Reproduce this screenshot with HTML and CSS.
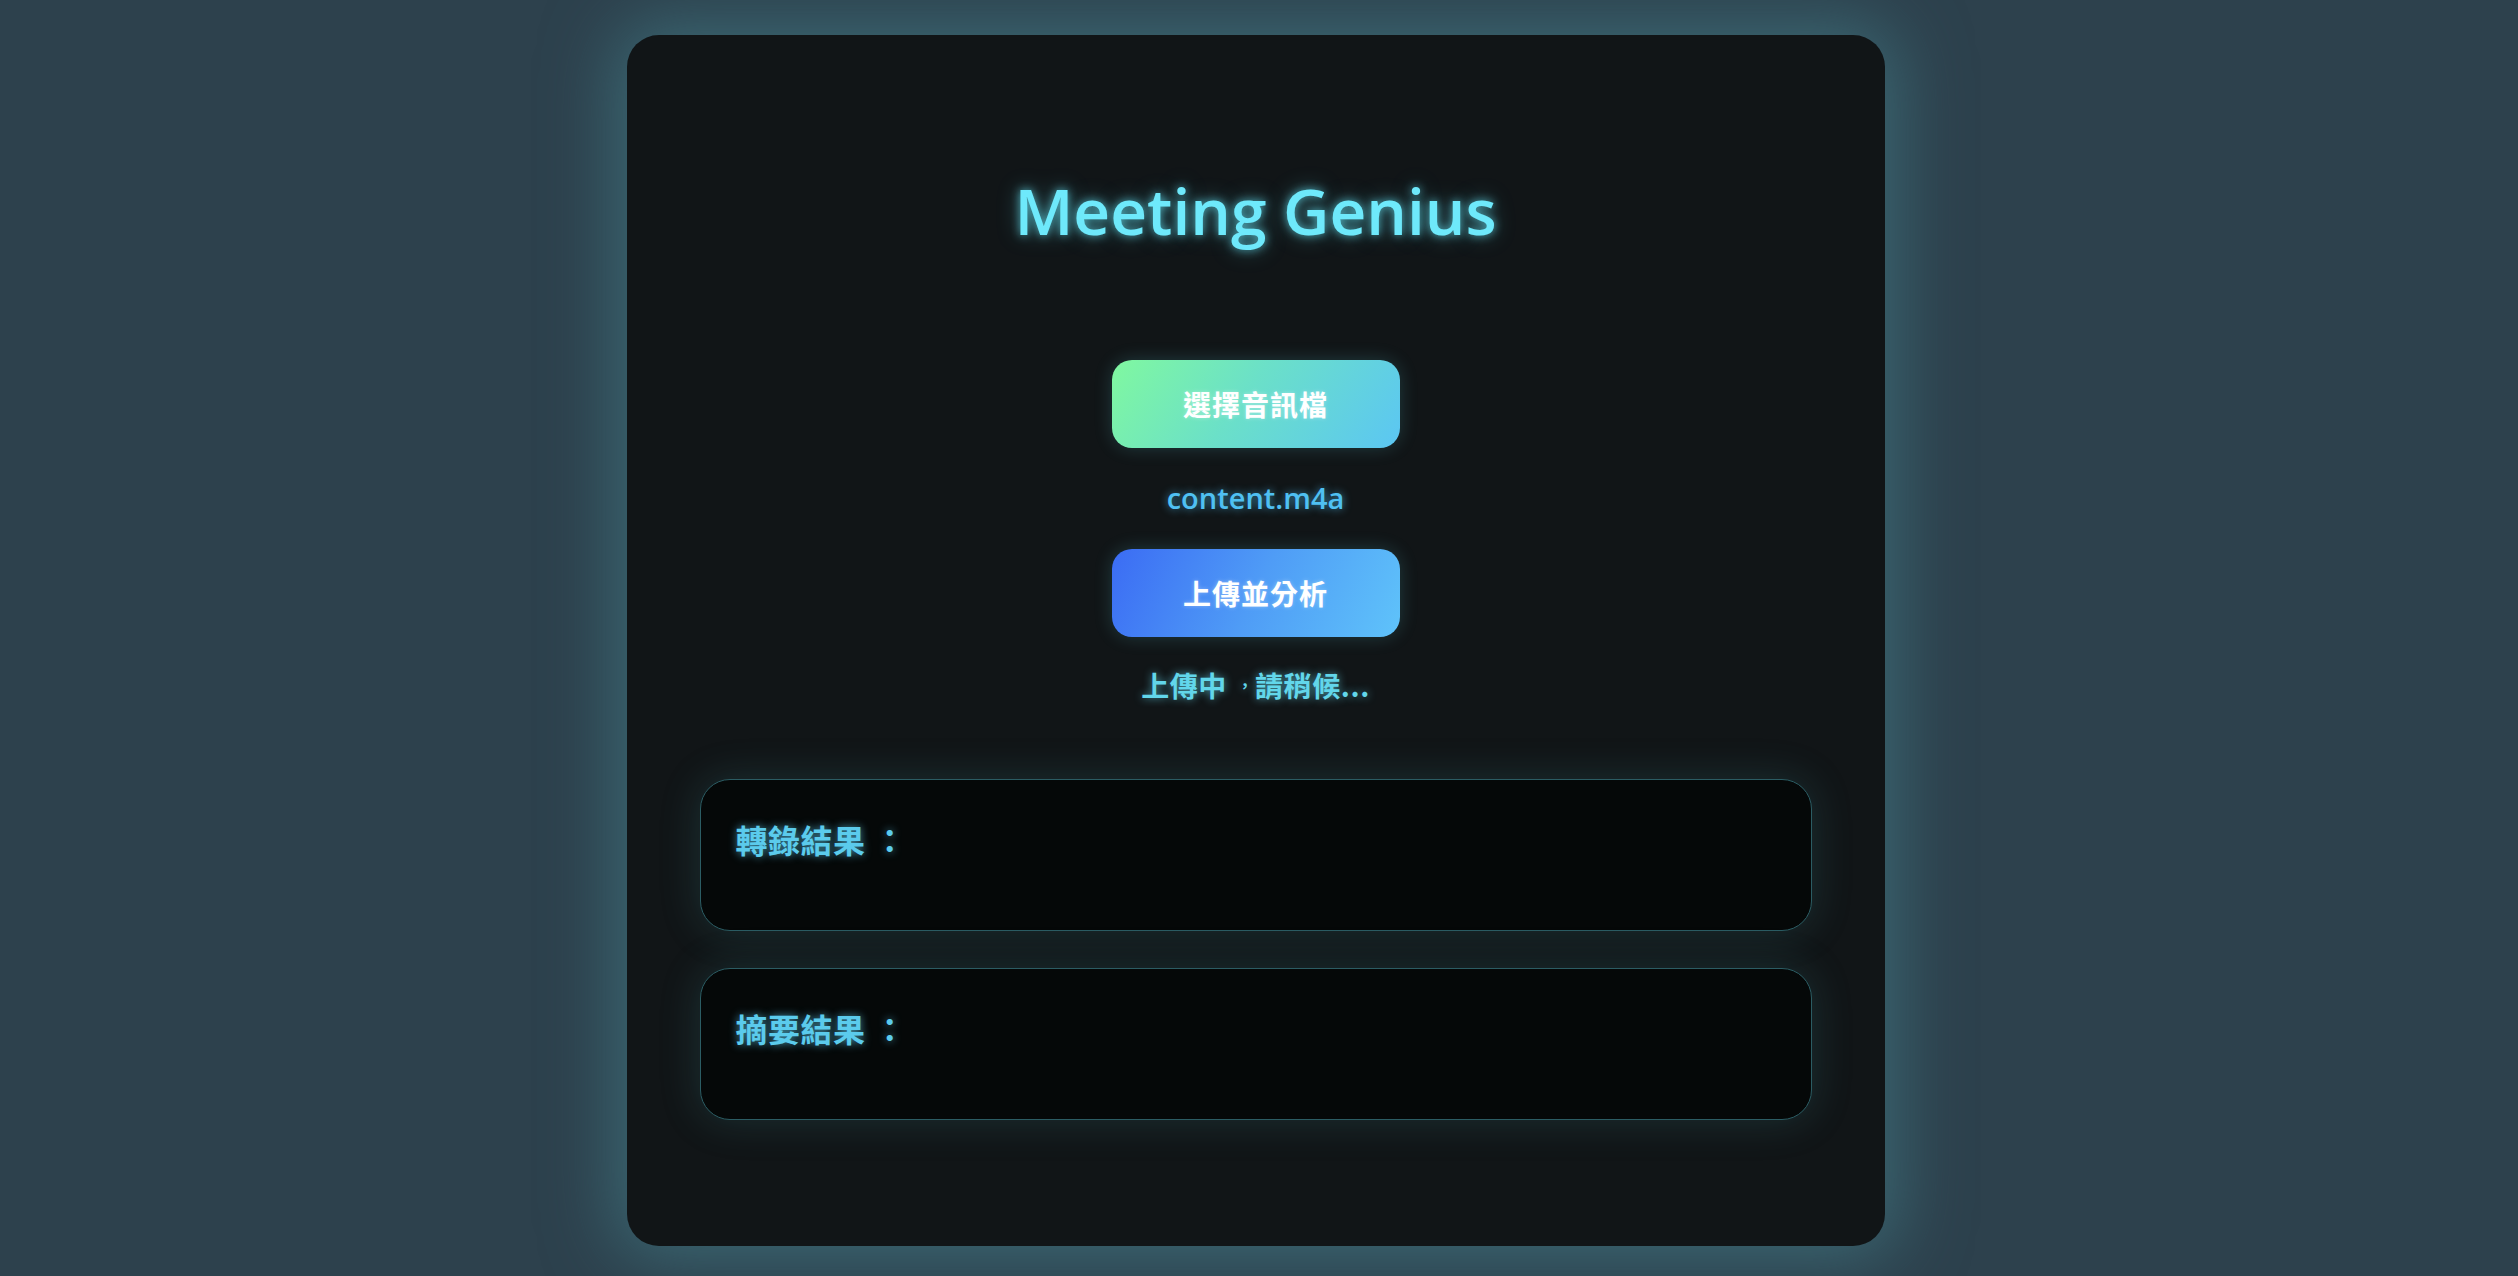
FILE: index.html
```html
<!DOCTYPE html>
<html lang="zh-TW">
<head>
<meta charset="utf-8">
<title>Meeting Genius</title>
<link rel="stylesheet" href="styles.css">
</head>
<body>
<main class="page">
  <section class="card">
    <h1 class="title">Meeting Genius</h1>
    <div class="controls">
      <button class="btn btn-select">選擇音訊檔</button>
      <div class="filename">content.m4a</div>
      <button class="btn btn-upload">上傳並分析</button>
      <div class="status">上傳中<span class="comma">，</span>請稍候...</div>
    </div>
    <div class="results">
      <div class="result-box">
        <h3 class="result-title">轉錄結果<span class="colon">：</span></h3>
        <div class="result-body"></div>
      </div>
      <div class="result-box">
        <h3 class="result-title">摘要結果<span class="colon">：</span></h3>
        <div class="result-body"></div>
      </div>
    </div>
  </section>
</main>
</body>
</html>
```
FILE: styles.css
```css
html, body {
  margin: 0;
  padding: 0;
}
body {
  background: #2d414d;
  font-family: "Open Sans", "Noto Sans", "Noto Sans CJK TC", sans-serif;
}
.page {
  padding: 35px 7px 30px 0;
  display: flex;
  justify-content: center;
}
.card {
  width: 1258px;
  box-sizing: border-box;
  background: #111517;
  border-radius: 32px;
  padding: 0 73px 126px;
  box-shadow: 0 0 70px 12px rgba(64, 118, 128, 0.75);
  display: flex;
  flex-direction: column;
}
.title {
  margin: 137px 0 0;
  text-align: center;
  font-size: 64px;
  line-height: 77px;
  font-weight: 600;
  color: #6ee9fb;
  text-shadow: 0 0 10px rgba(103, 232, 249, 0.75), 0 0 22px rgba(103, 232, 249, 0.35);
  font-family: "Open Sans", "Noto Sans", sans-serif;
}
.controls {
  display: flex;
  flex-direction: column;
  align-items: center;
  margin-top: 111px;
}
.btn {
  width: 288px;
  height: 88px;
  border: none;
  border-radius: 20px;
  color: #ffffff;
  font-family: "Noto Sans CJK TC", sans-serif;
  font-size: 28px;
  font-weight: 700;
  letter-spacing: 1px;
  box-shadow: 0 0 18px rgba(90, 200, 210, 0.22);
  cursor: pointer;
  text-shadow: 0 0 4px rgba(255, 255, 255, 0.35);
}
.btn-select {
  background: linear-gradient(125deg, #80f8a0 0%, #6be0c8 45%, #5bc6f3 100%);
}
.btn-upload {
  margin-top: 31px;
  background: linear-gradient(115deg, #3b6cf4 0%, #4f9cf6 50%, #5fc3fa 100%);
}
.filename {
  margin-top: 30px;
  font-size: 29px;
  line-height: 40px;
  font-weight: 600;
  color: #4fc0f2;
  text-shadow: 0 0 8px rgba(79, 192, 242, 0.7);
}
.status {
  margin-top: 28px;
  font-family: "Noto Sans CJK TC", sans-serif;
  font-size: 28px;
  line-height: 40px;
  font-weight: 700;
  letter-spacing: 0.6px;
  color: #62d6ea;
  text-shadow: 0 0 8px rgba(98, 214, 234, 0.7);
}
.comma {
  display: inline-block;
  box-sizing: border-box;
  width: 28px;
  padding-left: 10px;
  font-size: 16px;
  line-height: 16px;
  letter-spacing: 0;
  vertical-align: 5px;
}
.colon {
  display: inline-block;
  transform: translateX(0.26em);
}
.results {
  margin-top: 74px;
  display: flex;
  flex-direction: column;
  gap: 37px;
}
.result-box {
  height: 152px;
  box-sizing: border-box;
  background: #050808;
  border: 1.5px solid #2b5c63;
  border-radius: 30px;
  padding: 32px 35px;
  box-shadow: 0 0 40px rgba(70, 150, 155, 0.22);
}
.result-title {
  margin: 0;
  font-family: "Noto Sans CJK TC", sans-serif;
  font-size: 32px;
  line-height: 54px;
  font-weight: 700;
  letter-spacing: 0.5px;
  color: #5bcbec;
  text-shadow: 0 0 8px rgba(91, 203, 236, 0.7);
}
```
